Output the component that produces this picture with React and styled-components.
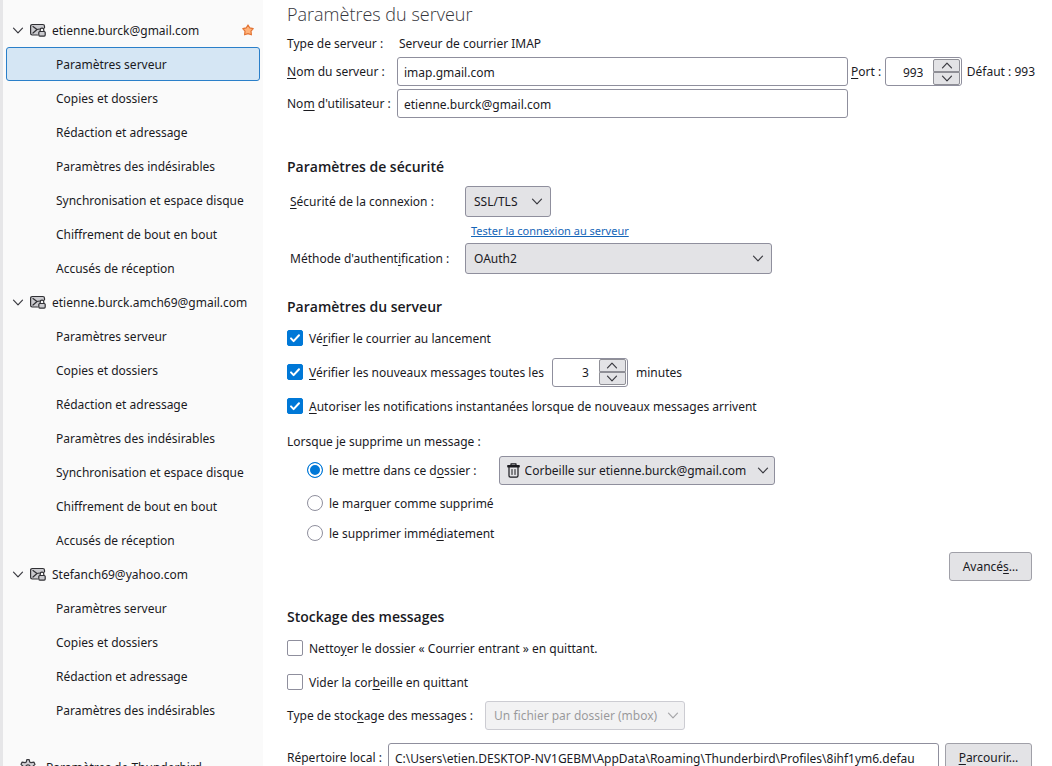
import { useState } from 'react';
import styled, { createGlobalStyle, css } from 'styled-components';

const GlobalStyle = createGlobalStyle`
  * {
    box-sizing: border-box;
  }

  body {
    margin: 0;
    background: #ffffff;
    overflow: hidden;
  }

  body, input, select, button {
    font-family: "Noto Sans", "Open Sans", sans-serif;
    font-size: 12px;
    line-height: 21px;
    color: #1a1a1f;
  }
`;

const Page = styled.div`
  display: flex;
  height: 100vh;
  overflow: hidden;
`;

const Sidebar = styled.nav`
  flex: 0 0 263px;
  padding: 13px 3px 0 3px;
  background: #fafafa;
  border-left: 3px solid #e6e6e8;
  overflow: hidden;
`;

const Account = styled.div`
  display: flex;
  align-items: center;
  height: 34px;
  padding: 0 6px;
  white-space: nowrap;

  svg {
    flex-shrink: 0;
  }
`;

const AccountName = styled.span`
  flex: 1;
  min-width: 0;
  margin-left: 6px;
`;

const AccountIcon = styled.span`
  display: flex;
  margin-left: 6px;
`;

const Item = styled.a`
  display: flex;
  align-items: center;
  height: 34px;
  padding-left: 49px;
  border: 1px solid ${props => props.$selected ? '#2a7fc9' : 'transparent'};
  border-radius: 3px;
  background: ${props => props.$selected ? '#d5e6f4' : 'transparent'};
  color: inherit;
  text-decoration: none;
  white-space: nowrap;
`;

const FooterItem = styled.a`
  display: flex;
  align-items: center;
  gap: 10px;
  height: 34px;
  margin-top: 23px;
  padding-left: 14px;
  color: inherit;
  text-decoration: none;
`;

const Main = styled.main`
  flex: 1;
  min-width: 0;
  padding: 0 17px 0 24px;
  white-space: nowrap;

  u {
    text-underline-offset: 2px;
  }
`;

const Title = styled.h1`
  margin: 0 0 5px;
  font-family: "Open Sans", sans-serif;
  font-size: 18px;
  font-weight: 300;
  line-height: 28px;
  color: #36363c;
`;

const Heading = styled.h2`
  margin: ${props => props.$top}px 0 2px;
  font-family: "Open Sans", sans-serif;
  font-size: 14px;
  font-weight: 600;
  line-height: 24px;
`;

const ServerGrid = styled.div`
  display: grid;
  grid-template-columns: 107px 1fr 184px;
  gap: 3px;
  align-items: center;
`;

const ServerType = styled.span`
  grid-column: 2 / 4;
  padding-left: 2px;
`;

const PortGroup = styled.div`
  display: flex;
  align-items: center;
  justify-content: space-between;
`;

const SecurityGrid = styled.div`
  display: grid;
  grid-template-columns: 175px 307px;
  grid-template-rows: 31px 26px 31px;
  align-items: center;
  padding-left: 3px;
  margin-top: 7px;
`;

const TestLink = styled.a`
  grid-column: 2;
  padding-left: 6px;
  font-size: 11px;
  color: #1565b8;
  text-decoration: underline;
`;

const fieldBox = css`
  border: 1px solid #8f8f9d;
  border-radius: 3px;
  background: #ffffff;
`;

const TextInput = styled.input`
  ${fieldBox}
  width: 100%;
  min-width: 0;
  height: 29px;
  padding: 1px 6px 0;
  outline: none;
`;

const SpinBox = styled.span`
  ${fieldBox}
  display: flex;
  align-items: center;
  width: ${props => props.$width}px;
  height: 29px;
  padding-right: 1px;
`;

const SpinInput = styled.input`
  flex: 1;
  min-width: 0;
  height: 27px;
  padding: 1px 10px 0 0;
  border: 0;
  outline: none;
  background: transparent;
  text-align: right;
  appearance: textfield;

  &::-webkit-inner-spin-button {
    appearance: none;
    margin: 0;
  }
`;

const SpinButtons = styled.span`
  display: flex;
  flex-direction: column;
  width: 27px;
`;

const SpinButton = styled.button`
  display: flex;
  align-items: center;
  justify-content: center;
  height: 13px;
  padding: 0;
  border: 1px solid #8f8f96;
  border-radius: ${props => props.$down ? '0 0 2px 2px' : '2px 2px 0 0'};
  background: #e3e3e6;
`;

const SelectWrap = styled.span`
  position: relative;
  display: inline-flex;
  width: ${props => props.$width}px;
  opacity: ${props => props.$faded ? 0.45 : 1};
`;

const SelectBox = styled.select`
  appearance: none;
  width: 100%;
  height: ${props => props.$tall ? 31 : 29}px;
  padding: 0 18px 0 ${props => props.$indent}px;
  border: 1px solid #8f8f9d;
  border-radius: 3px;
  background: #e3e3e6;
  color: #1a1a1f;
  opacity: 1;
  outline: none;
`;

const SelectArrow = styled.span`
  position: absolute;
  top: 0;
  bottom: 0;
  right: ${props => props.$right}px;
  display: flex;
  align-items: center;
  pointer-events: none;
`;

const SelectIcon = styled(SelectArrow)`
  left: 8px;
  right: auto;
`;

const CheckRow = styled.div`
  display: flex;
  align-items: center;
  height: 34px;
  gap: 8px;
`;

const CheckLabel = styled.label`
  display: flex;
  align-items: center;
  gap: 6px;
`;

const Checkbox = styled.input`
  appearance: none;
  width: 16px;
  height: 16px;
  margin: 0;
  border: 1px solid #8f8f9d;
  border-radius: 2px;
  background: #ffffff;

  &:checked {
    border-color: #0078d7;
    background: #0078d7 url("data:image/svg+xml,%3Csvg xmlns='http://www.w3.org/2000/svg' viewBox='0 0 14 14'%3E%3Cpath d='M3 7.4l2.6 2.7L11 4.2' fill='none' stroke='white' stroke-width='2' stroke-linecap='round' stroke-linejoin='round'/%3E%3C/svg%3E");
  }
`;

const DeleteLabel = styled.div`
  margin: 8px 0 3px;
`;

const RadioRow = styled.div`
  display: flex;
  align-items: center;
  height: 30px;
  padding-left: 20px;
  gap: 22px;

  &:first-of-type {
    margin-bottom: 3px;
  }
`;

const Radio = styled.input`
  appearance: none;
  width: 16px;
  height: 16px;
  margin: 0;
  border: 1px solid #8f8f9d;
  border-radius: 50%;
  background: #ffffff;

  &:checked {
    border-color: #0078d7;
    background: #0078d7;
    box-shadow: inset 0 0 0 2px #ffffff;
  }
`;

const ButtonRow = styled.div`
  display: flex;
  justify-content: flex-end;
  margin: 4px 3px 0 0;
`;

const Button = styled.button`
  min-width: 83px;
  height: 29px;
  padding: 0 12px;
  border: 1px solid #a0a0a8;
  border-radius: 3px;
  background: #e3e3e6;
`;

const StoreRow = styled.div`
  display: flex;
  align-items: center;
  gap: 12px;
  margin-top: 2px;
`;

const PathRow = styled.div`
  display: grid;
  grid-template-columns: 101px 1fr 93px;
  align-items: center;
  margin: 13px 3px 0 0;

  button {
    margin-left: 6px;
  }
`;

const Chevron = ({ up = false }) => (
  <svg width="12" height="7" viewBox="0 0 12 7" fill="none" stroke="#3a3a40" strokeWidth="1.2" strokeLinecap="round" strokeLinejoin="round">
    <path d={up ? 'M1.500 5.800L6 1.200l4.500 4.600' : 'M1.500 1.200L6 5.800l4.500-4.600'} />
  </svg>
);

const MailLockIcon = () => (
  <svg width="16" height="16" viewBox="0 0 16 16" fill="none" stroke="#303034" strokeLinecap="round" strokeLinejoin="round">
    <path d="M7.500 13H2.200A1.700 1.700 0 0 1 .6 11.300V4.200c0-.9.700-1.700 1.600-1.700h10.600c.9 0 1.700.8 1.700 1.700V6" fill="#cbcbcf" strokeWidth="1.2" />
    <path d="M3 4.500L7 7.500 3 11M7 7.500l2.500-.5" strokeWidth="1.2" />
    <path d="M10.200 9.500V8a1.800 1.800 0 0 1 3.600 0v1.500" fill="#fafafa" strokeWidth="1.2" />
    <rect x="8.800" y="9.500" width="6.400" height="4.600" rx="1" fill="#cbcbcf" strokeWidth="1.2" />
  </svg>
);

const StarIcon = () => (
  <svg width="12" height="12" viewBox="0 0 12 12" fill="#ffb27a" stroke="#e37434" strokeWidth="1.2" strokeLinejoin="round">
    <path d="M6 1l1.700 2.800 3.500.8L9 7.200l.4 3.600L6 9.600l-3.400 1.200L3 7.200.8 4.600l3.500-.8z" />
  </svg>
);

const TrashIcon = () => (
  <svg width="13" height="15" viewBox="0 0 13 15" fill="none" stroke="#1a1a1f" strokeWidth="1.2" strokeLinecap="round" strokeLinejoin="round">
    <path d="M.8 3.800V2.600h11.400v1.200zM4 2.400V.8h5v1.600M2 4v8.800c0 .9.500 1.400 1.400 1.400h6.200c.9 0 1.400-.5 1.400-1.400V4" />
    <path d="M5 6.500v5M8 6.500v5" strokeWidth="1" />
  </svg>
);

const GearIcon = () => (
  <svg width="16" height="16" viewBox="0 0 16 16" fill="#d2d2d6" stroke="#3a3a3f" strokeWidth="1.2" strokeLinejoin="round">
    <path d="M6.800.7h2.400l.5 2.300 1.300.7 3-.5 1 2.200L13.200 7v2l1.800 1.600-1 2.200-3-.5-1.300.7-.5 2.300H6.800L6.300 13 5 12.300l-3 .5-1-2.200L2.800 9V7L1 5.400l1-2.200 3 .5L6.300 3z" />
    <circle cx="8" cy="8" r="2.2" fill="#fafafa" />
  </svg>
);

const Select = ({ id, label, width, tall, indent = 8, arrowRight = 8, icon, disabled, children }) => (
  <SelectWrap $width={width} $faded={disabled}>
    <SelectBox id={id} aria-label={label} $tall={tall} $indent={indent} disabled={disabled}>
      <option>{children}</option>
    </SelectBox>
    {icon && <SelectIcon>{icon}</SelectIcon>}
    <SelectArrow $right={arrowRight}><Chevron /></SelectArrow>
  </SelectWrap>
);

const NumberField = ({ id, initial, width, label }) => {
  const [value, setValue] = useState(initial);

  return (
    <SpinBox $width={width}>
      <SpinInput id={id} type="number" aria-label={label} value={value} onChange={e => setValue(Number(e.target.value))} />
      <SpinButtons>
        <SpinButton type="button" aria-label="Augmenter" onClick={() => setValue(value + 1)}><Chevron up /></SpinButton>
        <SpinButton type="button" aria-label="Diminuer" $down onClick={() => setValue(value - 1)}><Chevron /></SpinButton>
      </SpinButtons>
    </SpinBox>
  );
};

const pages = [
  'Paramètres serveur',
  'Copies et dossiers',
  'Rédaction et adressage',
  'Paramètres des indésirables',
  'Synchronisation et espace disque',
  'Chiffrement de bout en bout',
  'Accusés de réception',
];

const accounts = [
  { name: 'etienne.burck@gmail.com', pages, isDefault: true },
  { name: 'etienne.burck.amch69@gmail.com', pages },
  { name: 'Stefanch69@yahoo.com', pages: pages.slice(0, 4) },
];

const App = () => {
  const [selected, setSelected] = useState('0-0');
  const [onDelete, setOnDelete] = useState('move');

  return (
    <>
      <GlobalStyle />
      <Page>
        <Sidebar>
          {accounts.map((account, i) => (
            <div key={account.name}>
              <Account>
                <Chevron />
                <AccountIcon><MailLockIcon /></AccountIcon>
                <AccountName>{account.name}</AccountName>
                {account.isDefault && <StarIcon />}
              </Account>
              {account.pages.map((page, j) => (
                <Item key={page} href="#" $selected={selected === `${i}-${j}`} onClick={() => setSelected(`${i}-${j}`)}>
                  {page}
                </Item>
              ))}
            </div>
          ))}
          <FooterItem href="#"><GearIcon />Paramètres de Thunderbird</FooterItem>
        </Sidebar>

        <Main>
          <Title>Paramètres du serveur</Title>
          <ServerGrid>
            <span>Type de serveur :</span>
            <ServerType>Serveur de courrier IMAP</ServerType>
            <label htmlFor="host"><u>N</u>om du serveur :</label>
            <TextInput id="host" defaultValue="imap.gmail.com" />
            <PortGroup>
              <label htmlFor="port"><u>P</u>ort :</label>
              <NumberField id="port" initial={993} width={77} />
              <span>Défaut : 993</span>
            </PortGroup>
            <label htmlFor="user">No<u>m</u> d'utilisateur :</label>
            <TextInput id="user" defaultValue="etienne.burck@gmail.com" />
          </ServerGrid>

          <Heading $top={37}>Paramètres de sécurité</Heading>
          <SecurityGrid>
            <label htmlFor="security"><u>S</u>écurité de la connexion :</label>
            <Select id="security" width={86} tall>SSL/TLS</Select>
            <TestLink href="#">Tester la connexion au serveur</TestLink>
            <label htmlFor="auth">Méthode d'authent<u>i</u>fication :</label>
            <Select id="auth" width={307} tall>OAuth2</Select>
          </SecurityGrid>

          <Heading $top={21}>Paramètres du serveur</Heading>
          <CheckRow>
            <CheckLabel><Checkbox type="checkbox" defaultChecked /><span>Vé<u>r</u>ifier le courrier au lancement</span></CheckLabel>
          </CheckRow>
          <CheckRow>
            <CheckLabel><Checkbox type="checkbox" defaultChecked /><span><u>V</u>érifier les nouveaux messages toutes les</span></CheckLabel>
            <NumberField initial={3} width={76} label="Intervalle en minutes" />
            <span>minutes</span>
          </CheckRow>
          <CheckRow>
            <CheckLabel><Checkbox type="checkbox" defaultChecked /><span><u>A</u>utoriser les notifications instantanées lorsque de nouveaux messages arrivent</span></CheckLabel>
          </CheckRow>

          <DeleteLabel>Lorsque je supprime un message :</DeleteLabel>
          <div>
            <RadioRow>
              <CheckLabel><Radio type="radio" name="delete" checked={onDelete === 'move'} onChange={() => setOnDelete('move')} /><span>le mettre dans ce d<u>o</u>ssier :</span></CheckLabel>
              <Select width={276} indent={25} arrowRight={6} icon={<TrashIcon />} label="Dossier de suppression">Corbeille sur etienne.burck@gmail.com</Select>
            </RadioRow>
            <RadioRow>
              <CheckLabel><Radio type="radio" name="delete" checked={onDelete === 'mark'} onChange={() => setOnDelete('mark')} /><span>le mar<u>q</u>uer comme supprimé</span></CheckLabel>
            </RadioRow>
            <RadioRow>
              <CheckLabel><Radio type="radio" name="delete" checked={onDelete === 'remove'} onChange={() => setOnDelete('remove')} /><span>le supprimer immé<u>d</u>iatement</span></CheckLabel>
            </RadioRow>
          </div>
          <ButtonRow>
            <Button type="button">Avancé<u>s</u>…</Button>
          </ButtonRow>

          <Heading $top={24}>Stockage des messages</Heading>
          <CheckRow>
            <CheckLabel><Checkbox type="checkbox" /><span>Netto<u>y</u>er le dossier « Courrier entrant » en quittant.</span></CheckLabel>
          </CheckRow>
          <CheckRow>
            <CheckLabel><Checkbox type="checkbox" /><span>Vider la cor<u>b</u>eille en quittant</span></CheckLabel>
          </CheckRow>
          <StoreRow>
            <label htmlFor="store">Type de stoc<u>k</u>age des messages :</label>
            <Select id="store" width={200} arrowRight={6} disabled>Un fichier par dossier (mbox)</Select>
          </StoreRow>
          <PathRow>
            <label htmlFor="path">Répertoire local :</label>
            <TextInput id="path" readOnly defaultValue="C:\Users\etien.DESKTOP-NV1GEBM\AppData\Roaming\Thunderbird\Profiles\8ihf1ym6.defau" />
            <Button type="button"><u>P</u>arcourir…</Button>
          </PathRow>
        </Main>
      </Page>
    </>
  );
};

export default App;
